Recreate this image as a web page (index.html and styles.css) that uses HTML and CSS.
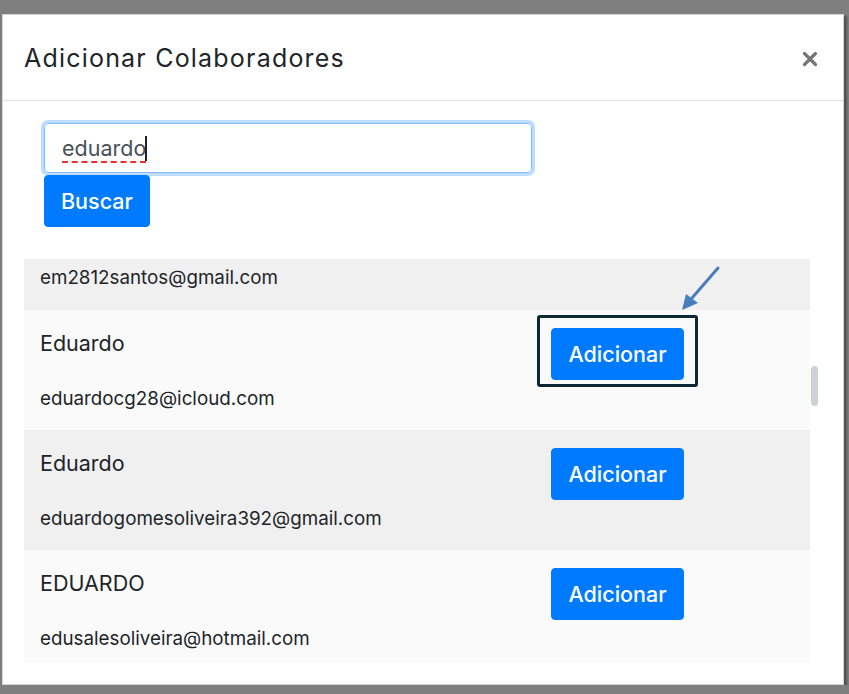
FILE: index.html
```html
<!DOCTYPE html>
<html lang="pt-BR">
<head>
    <meta charset="UTF-8">
    <meta name="viewport" content="width=device-width, initial-scale=1.0">
    <title>Adicionar Colaboradores</title>
    <link rel="stylesheet" href="styles.css">
</head>
<body>
    <div class="modal">
        <div class="modal-header">
            <h5 class="modal-title">Adicionar Colaboradores</h5>
            <button class="close" aria-label="Fechar">
                <svg width="16" height="16" viewBox="0 0 16 16">
                    <path d="M2.5 2.5 L13.5 13.5 M13.5 2.5 L2.5 13.5" stroke="currentColor" stroke-width="3.2" stroke-linecap="round"/>
                </svg>
            </button>
        </div>

        <div class="modal-body">
            <form class="search">
                <div class="search-field"><span class="typed">eduardo</span><span class="caret"></span></div>
                <button type="button" class="btn">Buscar</button>
            </form>

            <div class="results">
                <ul class="user-list">
                    <!-- linha já rolada: só o e-mail aparece -->
                    <li class="user-row is-partial">
                        <div class="user-info">
                            <p class="user-email">em2812santos@gmail.com</p>
                        </div>
                    </li>
                    <li class="user-row">
                        <div class="user-info">
                            <p class="user-name">Eduardo</p>
                            <p class="user-email">eduardocg28@icloud.com</p>
                        </div>
                        <button class="btn">Adicionar</button>
                        <!-- destaque do botão -->
                        <span class="callout"></span>
                        <svg class="pointer" width="45" height="48" viewBox="0 0 45 48">
                            <line x1="39" y1="4" x2="13" y2="34" stroke="#4a7ebb" stroke-width="3" stroke-linecap="round"/>
                            <polygon points="3,46 7,30 19,39" fill="#4a7ebb"/>
                        </svg>
                    </li>
                    <li class="user-row">
                        <div class="user-info">
                            <p class="user-name">Eduardo</p>
                            <p class="user-email">eduardogomesoliveira392@gmail.com</p>
                        </div>
                        <button class="btn">Adicionar</button>
                    </li>
                    <li class="user-row">
                        <div class="user-info">
                            <p class="user-name">EDUARDO</p>
                            <p class="user-email">edusalesoliveira@hotmail.com</p>
                        </div>
                        <button class="btn">Adicionar</button>
                    </li>
                </ul>
                <span class="scroll-thumb"></span>
            </div>
        </div>
    </div>
</body>
</html>
```

FILE: styles.css
```css
body {
    margin: 0;
    background: #7f7f7f;
    font-family: Inter, "Noto Sans", sans-serif;
    color: #212529;
}
.modal {
    margin: 14px 0 0 2px;
    width: 840px;
    background: #fff;
    border: 1px solid #d4d4d4;
    box-shadow: 3px 2px 2px rgba(0, 0, 0, .35);
}
.modal-header {
    display: flex;
    align-items: center;
    justify-content: space-between;
    height: 85px;
    padding: 0 24px 0 21px;
    border-bottom: 1px solid #dee2e6;
}
.modal-title {
    margin: 0;
    font-size: 25px;
    font-weight: 400;
    letter-spacing: 1.2px;
}
.close {
    display: flex;
    padding: 0;
    margin: 2px 1px 0 0;
    background: none;
    border: 0;
    color: #767676;
}
.modal-body {
    padding: 22px 21px 21px;
}
.search {
    display: flex;
    flex-direction: column;
    align-items: flex-start;
    gap: 2px;
    margin: 0 0 32px 20px;
}
.search-field {
    box-sizing: border-box;
    display: flex;
    align-items: center;
    width: 488px;
    height: 50px;
    padding: 0 17px;
    border: 1px solid #80bdff;
    border-radius: 4px;
    box-shadow: 0 0 0 3px rgba(0, 123, 255, .25);
    font-size: 21.5px;
    color: #495057;
}
.typed {
    text-decoration-line: underline;
    text-decoration-style: dashed;
    text-decoration-color: #e8322f;
    text-decoration-thickness: 1.5px;
    text-underline-offset: 5px;
}
.caret {
    width: 2px;
    height: 25px;
    margin-left: -1px;
    background: #222;
}
.btn {
    padding: 10px 16px;
    font-family: inherit;
    font-size: 21.5px;
    font-weight: 500;
    line-height: 30px;
    color: #fff;
    background: #007bff;
    border: 1px solid #007bff;
    border-radius: 4px;
}
.results {
    position: relative;
    height: 404px;
    overflow: hidden;
}
.user-list {
    list-style: none;
    margin: 0 12px 0 0;
    padding: 0;
}
.user-row {
    position: relative;
    display: grid;
    grid-template-columns: 511px 133px;
    align-items: start;
    height: 120px;
    box-sizing: border-box;
    padding: 18px 0 19px 16px;
}
.user-row.is-partial {
    height: 51px;
    padding-top: 6px;
}
.user-row.is-partial .user-email {
    margin-top: 0;
}
.user-row:nth-child(odd) {
    background: #f0f0f0;
}
.user-row:nth-child(even) {
    background: #fafafa;
}
.user-row .btn {
    height: 52px;
    padding: 0;
}
.user-name {
    margin: 0;
    font-size: 21.5px;
    line-height: 30px;
}
.user-email {
    margin: 28px 0 0;
    font-size: 18.8px;
    line-height: 26px;
}
.callout {
    position: absolute;
    left: 513px;
    top: 5px;
    width: 155px;
    height: 66px;
    border: 3px solid #0e2834;
    border-radius: 3px;
}
.pointer {
    position: absolute;
    left: 655px;
    top: -46px;
}
.scroll-thumb {
    position: absolute;
    left: 787px;
    top: 107px;
    width: 7px;
    height: 40px;
    border-radius: 4px;
    background: #cdd2d7;
}
```
